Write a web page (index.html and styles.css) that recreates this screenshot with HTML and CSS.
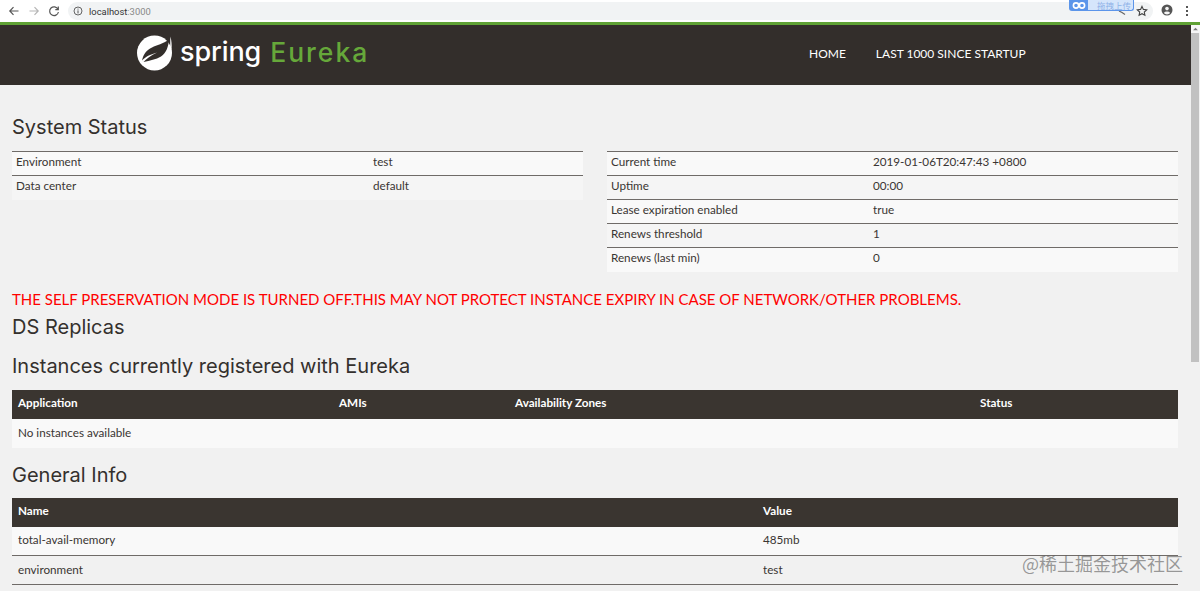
FILE: index.html
```html
<!DOCTYPE html>
<html lang="en">
<head>
<meta charset="utf-8">
<title>Eureka</title>
<link rel="stylesheet" href="styles.css">
</head>
<body>
<div class="browser">
  <svg class="tb-icon" viewBox="0 0 12 12"><path d="M10.500 6H2M5.500 2.200L1.800 6l3.700 3.800" fill="none" stroke="#555" stroke-width="1.200"/></svg>
  <svg class="tb-icon" viewBox="0 0 12 12"><path d="M1.500 6H10M6.500 2.200L10.200 6l-3.700 3.800" fill="none" stroke="#b5b5b5" stroke-width="1.200"/></svg>
  <svg class="tb-icon" viewBox="0 0 12 12"><path d="M10 4.200A4.400 4.400 0 1 0 10.400 7M10.300 1.600v3H7.300" fill="none" stroke="#555" stroke-width="1.200"/></svg>
  <div class="omnibox">
    <svg class="info" viewBox="0 0 10 10"><circle cx="5" cy="5" r="4" fill="none" stroke="#555" stroke-width=".9"/><path d="M5 4.400v3M5 2.600v1" stroke="#555" stroke-width="1"/></svg>
    <span class="host">localhost</span><span class="port">:3000</span>
  </div>
  <svg class="star" viewBox="0 0 12 12"><path d="M6 1.400l1.400 3 3.300.4-2.400 2.200.6 3.300L6 8.700l-2.900 1.600.6-3.300-2.400-2.200 3.300-.4z" fill="none" stroke="#444" stroke-width="1.100"/></svg>
  <svg class="avatar" viewBox="0 0 12 12"><circle cx="6" cy="6" r="5.500" fill="#555"/><circle cx="6" cy="4.600" r="1.800" fill="#f4f4f4"/><path d="M2.800 9a3.600 2.600 0 0 1 6.400 0 4.200 4.200 0 0 1-6.400 0z" fill="#f4f4f4"/></svg>
  <div class="menu"><i></i><i></i><i></i></div>
</div>
<svg class="lens" viewBox="0 0 8 5"><path d="M1 1l3 1.500 3 2" fill="none" stroke="#666" stroke-width="1.200"/></svg>
<div class="upload">
  <span class="upload-badge"><svg viewBox="0 0 14 10"><circle cx="4" cy="5.500" r="2.600" fill="none" stroke="#fff" stroke-width="1.600"/><circle cx="10" cy="5.500" r="2.600" fill="none" stroke="#fff" stroke-width="1.600"/></svg></span>
  <span class="upload-text">拖拽上传</span>
</div>

<div class="page">
  <div class="main">
    <nav class="nav">
      <div class="brand">
        <svg class="leaf" viewBox="0 0 36 36">
          <circle cx="17.500" cy="18" r="17.500" fill="#fff"/>
          <path d="M36 0H25C28 2 30 3 31.800 3.500 33.500 7 35 11 36 14z" fill="#332e2b"/>
          <path d="M33.500 1.500C34.500 6 35 10 34.500 14L33 15.500C33.500 10 33 6 33.500 1.500z" fill="#fff"/>
          <path d="M32 4.500C26 9 20 10 15 12.500 9.500 15 6.500 19 5 25.500 9 21 14 19.500 20 17.500 14 20.500 9 24 6.500 27 13 25.500 19 24.500 24 21.500 29.500 18 31.500 11 32 4.500z" fill="#332e2b"/>
        </svg>
        <span class="spring">spring</span>
        <span class="eureka">Eureka</span>
      </div>
      <div class="links"><span>HOME</span><span>LAST 1000 SINCE STARTUP</span></div>
    </nav>
    <div class="content">
      <h2 class="h-first">System Status</h2>
      <div class="status">
        <table class="stat stat-left">
          <tr><td>Environment</td><td>test</td></tr>
          <tr><td>Data center</td><td>default</td></tr>
        </table>
        <table class="stat stat-right">
          <tr><td>Current time</td><td>2019-01-06T20:47:43 +0800</td></tr>
          <tr><td>Uptime</td><td>00:00</td></tr>
          <tr><td>Lease expiration enabled</td><td>true</td></tr>
          <tr><td>Renews threshold</td><td>1</td></tr>
          <tr><td>Renews (last min)</td><td>0</td></tr>
        </table>
      </div>
      <p class="warn">THE SELF PRESERVATION MODE IS TURNED OFF.THIS MAY NOT PROTECT INSTANCE EXPIRY IN CASE OF NETWORK/OTHER PROBLEMS.</p>
      <h2 class="h-ds">DS Replicas</h2>
      <h2 class="h-inst">Instances currently registered with Eureka</h2>
      <table class="grid inst">
        <tr><th class="c-app">Application</th><th class="c-ami">AMIs</th><th class="c-az">Availability Zones</th><th>Status</th></tr>
        <tr><td colspan="4">No instances available</td></tr>
      </table>
      <h2 class="h-gen">General Info</h2>
      <table class="grid gen">
        <tr><th class="c-name">Name</th><th>Value</th></tr>
        <tr><td>total-avail-memory</td><td>485mb</td></tr>
        <tr><td>environment</td><td>test</td></tr>
      </table>
    </div>
  </div>
  <div class="scrollbar">
    <div class="scroll-head"><svg class="arrow" viewBox="0 0 8 5"><path d="M1 4l3-3 3 3z" fill="#777"/></svg></div>
    <div class="thumb"></div>
  </div>
</div>
<div class="watermark">@稀土掘金技术社区</div>
</body>
</html>
```
FILE: styles.css
```css
* { box-sizing: border-box; }
html, body { margin: 0; height: 591px; overflow: hidden; }
body {
  font-family: "Lato", "Liberation Sans", sans-serif;
  font-size: 11.700px;
  color: #3a3633;
  background: #f1f1f1;
  display: flex;
  flex-direction: column;
  position: relative;
}
.browser {
  height: 22px;
  flex: none;
  background: #fff;
  display: flex;
  align-items: center;
  padding-left: 8px;
  gap: 8px;
}
.tb-icon { width: 12px; height: 12px; flex: none; }
.omnibox {
  margin-left: 0;
  width: 1085px;
  height: 18px;
  border-radius: 9px;
  background: #f1f3f4;
  display: flex;
  align-items: center;
  padding-left: 5px;
  font-family: "Roboto", sans-serif;
  font-size: 9.400px;
  flex: none;
}
.info { width: 10px; height: 10px; margin-right: 6px; }
.host { color: #333; }
.port { color: #888; }
.star { position: absolute; left: 1136px; top: 5px; width: 12px; height: 12px; }
.avatar { position: absolute; left: 1161px; top: 4px; width: 12px; height: 12px; }
.menu { position: absolute; left: 1186px; top: 6px; display: flex; flex-direction: column; gap: 2px; }
.menu i { width: 2px; height: 2px; background: #555; display: block; }
.lens { position: absolute; left: 1118px; top: 10px; width: 8px; height: 5px; }
.upload {
  position: absolute;
  left: 1069px;
  top: 0;
  width: 65px;
  height: 11px;
  background: #d5e5fb;
  border: 1px solid #5b95ea;
  border-top: 0;
  border-radius: 0 0 3px 3px;
  display: flex;
}
.upload-badge { width: 18px; background: #5b95ea; display: flex; align-items: center; justify-content: center; }
.upload-badge svg { width: 14px; height: 10px; }
.upload-text { font: 8.500px/10px "Noto Sans CJK SC", sans-serif; color: #8fb2e8; padding-left: 9px; }
.page { flex: 1; display: flex; min-height: 0; }
.main { flex: 1; min-width: 0; }
.scrollbar { width: 9px; flex: none; background: #f1f1f1; border-top: 3px solid #5fa134; }
.scroll-head { height: 8px; background: #f6f6f6; padding-top: 2px; }
.arrow { width: 7px; height: 4px; display: block; margin: 0 auto; }
.thumb { height: 329px; width: 8px; background: #c1c1c1; }
.nav {
  height: 63px;
  background: #332e2b;
  border-top: 3px solid #5fa134;
  display: flex;
  align-items: center;
  padding: 0 0 1px 137px;
}
.brand { display: flex; align-items: center; width: 672px; margin-bottom: 4px; }
.leaf { width: 36px; height: 36px; margin-right: 7px; }
.spring { font: 500 27px/34px "Inter", sans-serif; color: #fff; letter-spacing: -.1px; margin-bottom: 2px; }
.eureka { font: 500 26.500px/34px "Inter", sans-serif; color: #66a83a; margin-left: 9px; letter-spacing: 2px; margin-bottom: 2px; }
.links { display: flex; gap: 30px; font-size: 12px; color: #fff; padding-bottom: 2px; }
.content { padding: 0 13px 0 12px; }
h2 { font-family: "Inter", sans-serif; font-weight: 400; font-size: 20px; line-height: 24px; margin: 0; color: #34302d; }
.h-first { padding-top: 30px; }
.status { display: flex; justify-content: space-between; align-items: flex-start; margin-top: 12px; }
table { border-collapse: collapse; border-spacing: 0; }
.stat { width: 571px; table-layout: fixed; }
.stat td { height: 24px; padding: 0 4px 6px; border-top: 1px solid #6f6b68; }
.stat tr:nth-child(odd) td { background: #f9f9f9; }
.stat tr:nth-child(even) td { background: #f5f5f5; }
.stat-left td:first-child { width: 357px; }
.stat-right td:first-child { width: 262px; }
.warn { margin: 0; color: #f00; font-size: 15px; line-height: 18px; padding-top: 18px; }
.h-ds { margin-top: 7px; }
.h-inst { margin-top: 15px; }
.grid { width: 1166px; table-layout: fixed; margin-top: 12px; }
.grid th { background: #3a3530; color: #fff; text-align: left; height: 29px; padding: 0 6px 5px; font-size: 11.700px; font-weight: 700; }
.grid td { height: 29px; padding: 0 6px 3px; background: #f9f9f9; border-bottom: 1px solid #6f6b68; }
.grid tr:nth-child(3) td { background: #f1f1f1; }
.inst td { border-bottom: 0; }
.c-app { width: 321px; }
.c-ami { width: 176px; }
.c-az { width: 465px; }
.c-name { width: 745px; }
.h-gen { margin-top: 15px; }
.gen { margin-top: 11px; }
.watermark {
  position: absolute;
  left: 1022px;
  top: 553px;
  font: 18px/20px "Noto Sans CJK SC", sans-serif;
  color: rgba(90, 90, 90, .6);
  white-space: nowrap;
}
```
